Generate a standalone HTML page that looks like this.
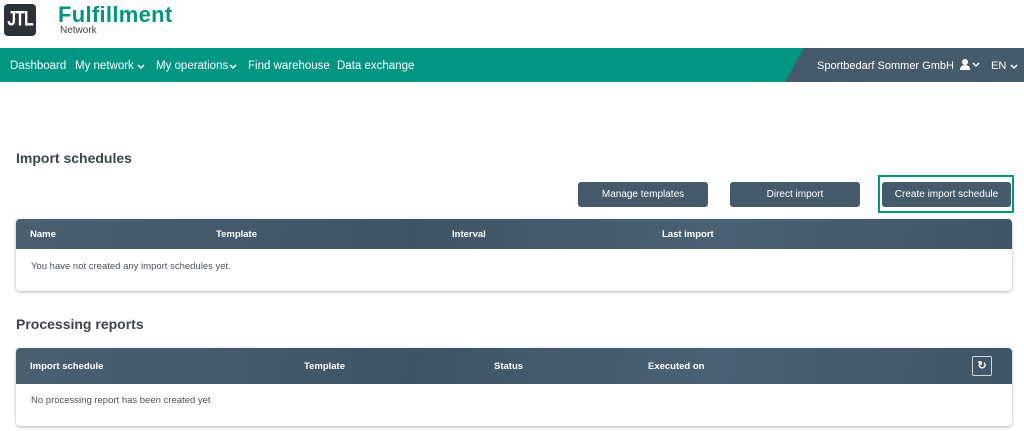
<!DOCTYPE html><html><head><style>
body{margin:0;width:1024px;height:431px;background:#fff;font-family:"Liberation Sans",sans-serif;position:relative;overflow:hidden;color:#3a4550}
.a{position:absolute}
.nav{left:0;top:48px;width:1024px;height:34px;background:#009682}
.nl{top:60px;color:#fff;font-size:11.5px;white-space:nowrap}
.btn{background:#455a6b;color:#fff;font-size:10px;text-align:center;line-height:25px;border-radius:3px;height:25px}
.card{left:16px;width:996px;border-radius:4px;box-shadow:0 1px 3px rgba(0,0,0,.3);background:#fff;overflow:hidden}
.hd{background:linear-gradient(100deg,#4a6072,#3f5566 40%,#4a6174 70%,#405566);color:#fff;font-size:9.5px;font-weight:bold;position:relative}
.hd span{position:absolute}
h2{position:absolute;margin:0;font-size:14px;font-weight:bold;color:#3a4550}
.chev{position:absolute;top:64px}
</style></head><body>
<div class="a" style="left:4px;top:4px;width:32px;height:32px;background:#2c3237;border-radius:4px"></div>
<div class="a" style="left:4px;top:4px;width:32px;height:32px;color:#fff;font-weight:bold;font-size:16px;line-height:32px;text-align:center;letter-spacing:-1px;transform:scaleY(1.35)">JTL</div>
<div class="a" style="left:58px;top:2px;color:#009682;font-weight:bold;font-size:22px;letter-spacing:0.3px">Fulfillment</div>
<div class="a" style="left:60px;top:25px;color:#444;font-size:10px">Network</div>
<div class="a nav"></div>
<svg class="a" style="left:780px;top:48px" width="244" height="34"><polygon points="24,0 244,0 244,34 5,34" fill="#455a6b"/></svg>
<div class="a nl" style="left:10px">Dashboard</div>
<div class="a nl" style="left:75px">My network</div>
<svg class="chev" style="left:137px" width="8" height="6"><path d="M1 1l3 3 3-3" stroke="#fff" fill="none" stroke-width="1.5"/></svg>
<div class="a nl" style="left:156px">My operations</div>
<svg class="chev" style="left:229px" width="8" height="6"><path d="M1 1l3 3 3-3" stroke="#fff" fill="none" stroke-width="1.5"/></svg>
<div class="a nl" style="left:248px">Find warehouse</div>
<div class="a nl" style="left:337px">Data exchange</div>
<div class="a nl" style="left:817px;font-size:11px;top:60px">Sportbedarf Sommer GmbH</div>
<svg class="a" style="left:960px;top:58px" width="22" height="14"><circle cx="5" cy="4" r="3" fill="#fff"/><path d="M0 12q0-5 5-5t5 5z" fill="#fff"/><path d="M13 5l3 3 3-3" stroke="#fff" fill="none" stroke-width="1.5"/></svg>
<div class="a nl" style="left:991px;font-size:11px;top:60px">EN</div>
<svg class="chev" style="left:1010px" width="8" height="6"><path d="M1 1l3 3 3-3" stroke="#fff" fill="none" stroke-width="1.5"/></svg>
<h2 style="left:16px;top:150px">Import schedules</h2>
<div class="a btn" style="left:578px;top:182px;width:130px">Manage templates</div>
<div class="a btn" style="left:730px;top:182px;width:130px">Direct import</div>
<div class="a" style="left:878px;top:175px;width:136px;height:38px;border:2px solid #009682;box-sizing:border-box"></div>
<div class="a btn" style="left:882px;top:182px;width:129px">Create import schedule</div>
<div class="a card" style="top:219px;height:72px"><div class="hd" style="height:30px"><span style="left:14px;top:10px">Name</span><span style="left:200px;top:10px">Template</span><span style="left:436px;top:10px">Interval</span><span style="left:646px;top:10px">Last import</span></div>
<div style="position:absolute;left:15px;top:42px;font-size:9.5px;color:#4a525a">You have not created any import schedules yet.</div></div>
<h2 style="left:16px;top:316px">Processing reports</h2>
<div class="a card" style="top:348px;height:78px"><div class="hd" style="height:36px"><span style="left:14px;top:13px">Import schedule</span><span style="left:288px;top:13px">Template</span><span style="left:478px;top:13px">Status</span><span style="left:632px;top:13px">Executed on</span>
<span style="left:956px;top:8px;width:18px;height:18px;border:1px solid #cfd6dc;border-radius:2px;text-align:center;line-height:18px;font-size:11px">↻</span></div>
<div style="position:absolute;left:15px;top:47px;font-size:9.5px;color:#4a525a">No processing report has been created yet</div></div>
</body></html>
